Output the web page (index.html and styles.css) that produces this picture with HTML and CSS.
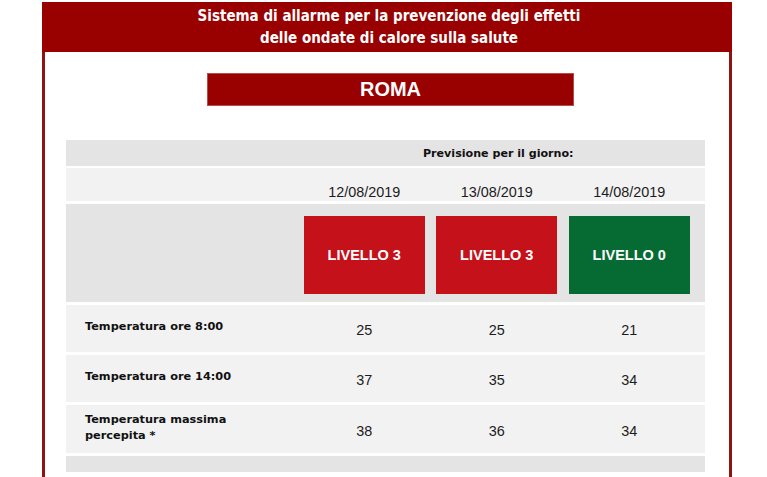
FILE: index.html
```html
<!DOCTYPE html>
<html lang="it">
<head>
<meta charset="utf-8">
<title>Ondate di calore - Roma</title>
<link rel="stylesheet" href="styles.css">
</head>
<body>
<div class="frame">
  <header class="banner">
    <div>Sistema di allarme per la prevenzione degli effetti</div>
    <div>delle ondate di calore sulla salute</div>
  </header>
  <main class="sheet">
    <div class="city">ROMA</div>
    <div class="grid">
      <div class="row dark r-head">
        <div class="label"></div>
        <div class="span3 head">Previsione per il giorno:</div>
        <div></div>
      </div>
      <div class="row light r-date">
        <div class="label"></div>
        <div class="cell date">12/08/2019</div>
        <div class="cell date">13/08/2019</div>
        <div class="cell date">14/08/2019</div>
        <div></div>
      </div>
      <div class="row dark r-level">
        <div class="label"></div>
        <div class="cell"><div class="level red">LIVELLO 3</div></div>
        <div class="cell"><div class="level red">LIVELLO 3</div></div>
        <div class="cell"><div class="level green">LIVELLO 0</div></div>
        <div></div>
      </div>
      <div class="row light r-temp">
        <div class="label">Temperatura ore 8:00</div>
        <div class="cell num">25</div>
        <div class="cell num">25</div>
        <div class="cell num">21</div>
        <div></div>
      </div>
      <div class="row light r-temp">
        <div class="label">Temperatura ore 14:00</div>
        <div class="cell num">37</div>
        <div class="cell num">35</div>
        <div class="cell num">34</div>
        <div></div>
      </div>
      <div class="row light r-temp r-tall">
        <div class="label">Temperatura massima<br>percepita *</div>
        <div class="cell num">38</div>
        <div class="cell num">36</div>
        <div class="cell num">34</div>
        <div></div>
      </div>
      <div class="row dark r-foot"></div>
    </div>
  </main>
</div>
</body>
</html>
```

FILE: styles.css
```css
html, body {
  margin: 0;
  padding: 0;
  background: #ffffff;
}

body {
  font-family: "Liberation Sans", Arial, sans-serif;
  color: #1a1a1a;
}

.frame {
  width: 690px;
  margin: 2px 0 0 42px;
}

.banner {
  background: #990000;
  color: #ffffff;
  font-family: "DejaVu Sans Condensed", "DejaVu Sans", sans-serif;
  font-weight: bold;
  font-size: 15px;
  line-height: 22px;
  text-align: center;
  padding: 3px 0 6px 4px;
  box-sizing: border-box;
  height: 50px;
}

.sheet {
  border-left: 3px solid #8e1414;
  border-right: 3px solid #8e1414;
  padding: 21px 24px 0 21px;
  min-height: 430px;
}

.city {
  width: 367px;
  height: 33px;
  margin-left: 141px;
  background: #990000;
  color: #ffffff;
  font-weight: bold;
  font-size: 20px;
  display: flex;
  align-items: center;
  justify-content: center;
  box-sizing: border-box;
  border: 1px solid #b84a4a;
}

.grid {
  margin-top: 34px;
  width: 639px;
  display: flex;
  flex-direction: column;
  gap: 3px;
}

.row {
  display: grid;
  grid-template-columns: 232px 132.5px 132.5px 132.5px 1fr;
}

.dark { background: #e4e4e4; }
.light { background: #f2f2f2; }

.r-head { height: 26px; margin-bottom: -1px; }
.r-date { height: 33px; }
.r-level { height: 98px; }
.r-temp { height: 47px; }
.r-tall { height: 48px; }
.r-foot { height: 16px; }

.span3 {
  grid-column: 2 / span 3;
}

.head {
  font-family: "DejaVu Sans", Verdana, sans-serif;
  font-weight: bold;
  font-size: 11.1px;
  color: #111111;
  display: flex;
  align-items: center;
  justify-content: center;
  padding-left: 3px;
}

.cell {
  display: flex;
  justify-content: center;
}

.date {
  font-size: 14.4px;
  align-items: flex-end;
  padding-bottom: 1px;
  color: #1c1c1c;
}

.r-level .cell {
  align-items: flex-start;
  padding-top: 12px;
}

.level {
  width: 121px;
  height: 78px;
  color: #ffffff;
  font-weight: bold;
  font-size: 14.5px;
  display: flex;
  align-items: center;
  justify-content: center;
}

.red { background: #c4111a; }
.green { background: #056b33; }

.label {
  font-family: "DejaVu Sans", Verdana, sans-serif;
  font-weight: bold;
  font-size: 11.3px;
  line-height: 16px;
  color: #111111;
  padding-left: 19px;
  display: flex;
  align-items: center;
  padding-bottom: 3px;
}

.num {
  font-size: 14.4px;
  align-items: center;
  padding-top: 3px;
  color: #1c1c1c;
}
```
